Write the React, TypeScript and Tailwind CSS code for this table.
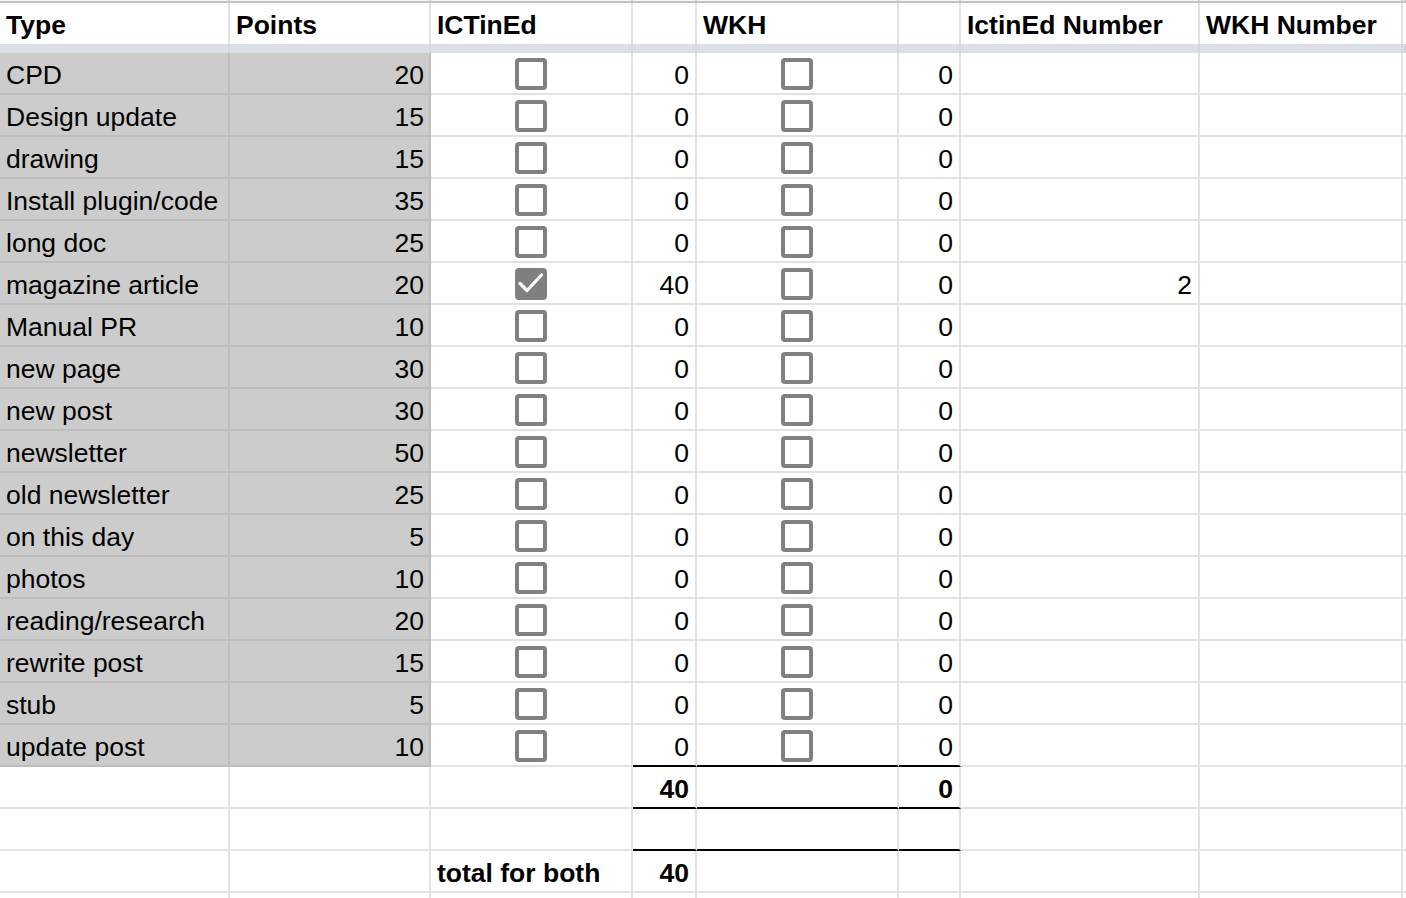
import { Fragment } from "react";

type Row = { type: string; points: number; ict?: boolean; ictNum?: string };

const rows: Row[] = [
  { type: "CPD", points: 20 },
  { type: "Design update", points: 15 },
  { type: "drawing", points: 15 },
  { type: "Install plugin/code", points: 35 },
  { type: "long doc", points: 25 },
  { type: "magazine article", points: 20, ict: true, ictNum: "2" },
  { type: "Manual PR", points: 10 },
  { type: "new page", points: 30 },
  { type: "new post", points: 30 },
  { type: "newsletter", points: 50 },
  { type: "old newsletter", points: 25 },
  { type: "on this day", points: 5 },
  { type: "photos", points: 10 },
  { type: "reading/research", points: 20 },
  { type: "rewrite post", points: 15 },
  { type: "stub", points: 5 },
  { type: "update post", points: 10 },
];

const cols = "grid grid-cols-[230px_201px_202px_64px_202px_62px_239px_203px_1fr]";
const cell =
  "h-[42px] border-r-2 border-b-2 flex items-end pb-[3px] px-[6px] leading-[30px] whitespace-nowrap overflow-hidden";
const line = "border-[#e2e2e2]";
const gray = "bg-[#cccccc] border-[#bdbdbd]";
const black = "border-r-[#e2e2e2] border-b-black";

function Checkbox({ checked }: { checked?: boolean }) {
  if (checked) {
    return (
      <span className="w-[32px] h-[32px] rounded-[4px] bg-[#7f7f7f] flex items-center justify-center">
        <svg width="32" height="32" viewBox="0 0 32 32">
          <polyline points="5,15.5 12,22.5 26.5,7" fill="none" stroke="white" strokeWidth="3.2" strokeLinecap="round" strokeLinejoin="round" />
        </svg>
      </span>
    );
  }
  return <span className="w-[32px] h-[32px] rounded-[4px] border-4 border-[#808080] bg-white" />;
}

export default function App() {
  const headers = ["Type", "Points", "ICTinEd", "", "WKH", "", "IctinEd Number", "WKH Number", ""];

  return (
    <div className="w-[1406px] h-[898px] overflow-hidden bg-white text-black text-[26.5px] font-['Liberation_Sans',Arial,sans-serif]">
      {/* column header edge */}
      <div className={cols}>
        {headers.map((_, i) => (
          <div key={i} className="h-px border-r-2 border-[#d6d6d6] bg-[#f5f5f5]" />
        ))}
      </div>
      <div className="h-[2px] bg-[#c4c4c4]" />

      {/* header row */}
      <div className={cols}>
        {headers.map((h, i) => (
          <div
            key={i}
            className="h-[41px] border-r-2 border-[#e2e2e2] flex items-end pb-[4px] px-[6px] leading-[30px] font-bold whitespace-nowrap overflow-hidden"
          >
            {h}
          </div>
        ))}
      </div>

      {/* frozen row divider */}
      <div className={cols}>
        {headers.map((_, i) => (
          <div key={i} className="h-[9px] border-r-2 border-[#d3d6df] bg-[#dcdfe7]" />
        ))}
      </div>

      {/* data rows */}
      <div className={cols}>
        {rows.map((r, idx) => {
          const last = idx === rows.length - 1;
          const tot = last ? black : line;
          return (
            <Fragment key={r.type}>
              <div className={`${cell} ${gray}`}>{r.type}</div>
              <div className={`${cell} ${gray} justify-end pr-[5px]`}>{r.points}</div>
              <div className={`${cell} ${line} items-center justify-center pb-0`}>
                <Checkbox checked={r.ict} />
              </div>
              <div className={`${cell} ${tot} justify-end`}>{r.ict ? r.points * 2 : 0}</div>
              <div className={`${cell} ${tot} items-center justify-center pb-0`}>
                <Checkbox />
              </div>
              <div className={`${cell} ${tot} justify-end`}>0</div>
              <div className={`${cell} ${line} justify-end`}>{r.ictNum ?? ""}</div>
              <div className={`${cell} ${line}`} />
              <div className={`${cell} ${line}`} />
            </Fragment>
          );
        })}

        {/* totals */}
        <div className={`${cell} ${line}`} />
        <div className={`${cell} ${line}`} />
        <div className={`${cell} ${line}`} />
        <div className={`${cell} ${black} justify-end font-bold`}>40</div>
        <div className={`${cell} ${black}`} />
        <div className={`${cell} ${black} justify-end font-bold`}>0</div>
        <div className={`${cell} ${line}`} />
        <div className={`${cell} ${line}`} />
        <div className={`${cell} ${line}`} />

        {/* spacer row */}
        <div className={`${cell} ${line}`} />
        <div className={`${cell} ${line}`} />
        <div className={`${cell} ${line}`} />
        <div className={`${cell} ${black}`} />
        <div className={`${cell} ${black}`} />
        <div className={`${cell} ${black}`} />
        <div className={`${cell} ${line}`} />
        <div className={`${cell} ${line}`} />
        <div className={`${cell} ${line}`} />

        {/* grand total */}
        <div className={`${cell} ${line}`} />
        <div className={`${cell} ${line}`} />
        <div className={`${cell} ${line} font-bold`}>total for both</div>
        <div className={`${cell} ${line} justify-end font-bold`}>40</div>
        <div className={`${cell} ${line}`} />
        <div className={`${cell} ${line}`} />
        <div className={`${cell} ${line}`} />
        <div className={`${cell} ${line}`} />
        <div className={`${cell} ${line}`} />

        {/* partial row at bottom */}
        {headers.map((_, i) => (
          <div key={`p${i}`} className={`${cell} ${line}`} />
        ))}
      </div>
    </div>
  );
}
